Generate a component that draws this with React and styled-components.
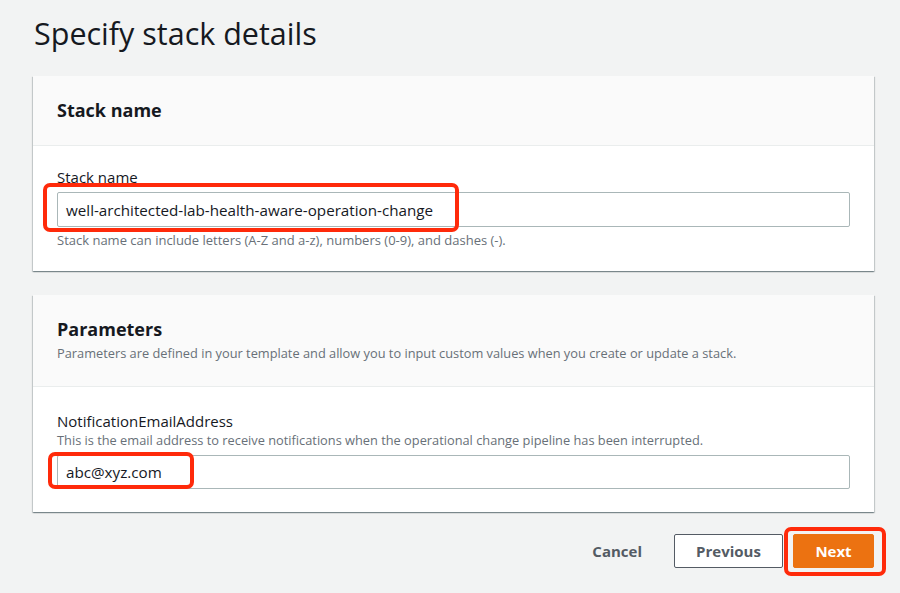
import React from "react";
import styled, { createGlobalStyle } from "styled-components";

const Global = createGlobalStyle`
  html, body { margin: 0; padding: 0; background: #f2f3f3; }
  body { font-family: "Open Sans", "Noto Sans", sans-serif; color: #16191f; }
  * { box-sizing: border-box; }
`;

const Page = styled.div`
  position: relative;
  width: 900px;
  height: 593px;
  overflow: hidden;
  padding: 0 26px 0 33px;
`;

const Title = styled.h1`
  margin: 0;
  padding: 13px 0 0 1px;
  height: 76px;
  font-size: 30.5px;
  font-weight: 400;
  line-height: 40px;
  color: #16191f;
`;

const Card = styled.section`
  background: #fff;
  box-shadow: 0 1px 1px 0 rgba(0, 28, 36, 0.3), 1px 1px 1px 0 rgba(0, 28, 36, 0.15),
    -1px 1px 1px 0 rgba(0, 28, 36, 0.15);
  margin-bottom: ${(p) => p.$mb || 0}px;
`;

const CardHeader = styled.div`
  background: #fafafa;
  border-bottom: 1px solid #eaeded;
  padding: ${(p) => p.$pad};
`;

const CardTitle = styled.h2`
  margin: 0;
  font-size: 18px;
  font-weight: 700;
  line-height: 24px;
  color: #16191f;
`;

const CardDesc = styled.p`
  margin: 4px 0 0;
  font-size: 12.8px;
  line-height: 16px;
  color: #687078;
`;

const CardBody = styled.div`
  padding: ${(p) => p.$pad};
`;

const Label = styled.div`
  font-size: 15px;
  line-height: 22px;
  color: #16191f;
`;

const Hint = styled.div`
  font-size: ${(p) => p.$fs || 13}px;
  line-height: 16px;
  color: #687078;
  margin: ${(p) => p.$m};
`;

const Input = styled.div`
  height: ${(p) => p.$h}px;
  margin-top: ${(p) => p.$mt || 0}px;
  border: 1px solid #aab7b8;
  border-radius: 2px;
  background: #fff;
  display: flex;
  align-items: center;
  padding: 0 8px;
  font-size: 15.2px;
  color: #16191f;
`;

const Actions = styled.div`
  display: flex;
  justify-content: flex-end;
  align-items: center;
  gap: 10px;
  margin-top: 22px;
`;

const TextButton = styled.button`
  border: none;
  background: transparent;
  font-family: inherit;
  font-size: 15px;
  font-weight: 700;
  color: #545b64;
  padding: 0 20px;
  height: 34px;
  margin-right: 2px;
`;

const Button = styled.button`
  height: 34px;
  min-width: ${(p) => p.$w}px;
  font-family: inherit;
  font-size: 15px;
  font-weight: 700;
  border-radius: 2px;
  border: 1px solid ${(p) => (p.$primary ? "#ec7211" : "#545b64")};
  background: ${(p) => (p.$primary ? "#ec7211" : "#fff")};
  color: ${(p) => (p.$primary ? "#fff" : "#545b64")};
  padding: 0 18px;
`;

const Highlight = styled.div`
  position: absolute;
  left: ${(p) => p.$x}px;
  top: ${(p) => p.$y}px;
  width: ${(p) => p.$w}px;
  height: ${(p) => p.$h}px;
  border: 4px solid #ff2a0a;
  border-radius: 7px;
  pointer-events: none;
`;

export default function App() {
  return (
    <>
      <Global />
      <Page>
        <Title>Specify stack details</Title>

        <Card $mb={24}>
          <CardHeader $pad="22px 24px 23px">
            <CardTitle>Stack name</CardTitle>
          </CardHeader>
          <CardBody $pad="20px 24px 23px">
            <Label>Stack name</Label>
            <Input $h={35} $mt={4}>
              well-architected-lab-health-aware-operation-change
            </Input>
            <Hint $m="5px 0 0">
              Stack name can include letters (A-Z and a-z), numbers (0-9), and dashes (-).
            </Hint>
          </CardBody>
        </Card>

        <Card>
          <CardHeader $pad="22px 24px 25px">
            <CardTitle>Parameters</CardTitle>
            <CardDesc>
              Parameters are defined in your template and allow you to input custom values when you
              create or update a stack.
            </CardDesc>
          </CardHeader>
          <CardBody $pad="23px 24px 23px">
            <Label>NotificationEmailAddress</Label>
            <Hint $m="0" $fs={12.8}>
              This is the email address to receive notifications when the operational change
              pipeline has been interrupted.
            </Hint>
            <Input $h={34} $mt={7}>
              abc@xyz.com
            </Input>
          </CardBody>
        </Card>

        <Actions>
          <TextButton>Cancel</TextButton>
          <Button $w={109}>Previous</Button>
          <Button $w={81} $primary>
            Next
          </Button>
        </Actions>

        <Highlight $x={43} $y={183} $w={416} $h={49} />
        <Highlight $x={48} $y={452} $w={146} $h={37} />
        <Highlight $x={784} $y={527} $w={102} $h={49} />
      </Page>
    </>
  );
}
